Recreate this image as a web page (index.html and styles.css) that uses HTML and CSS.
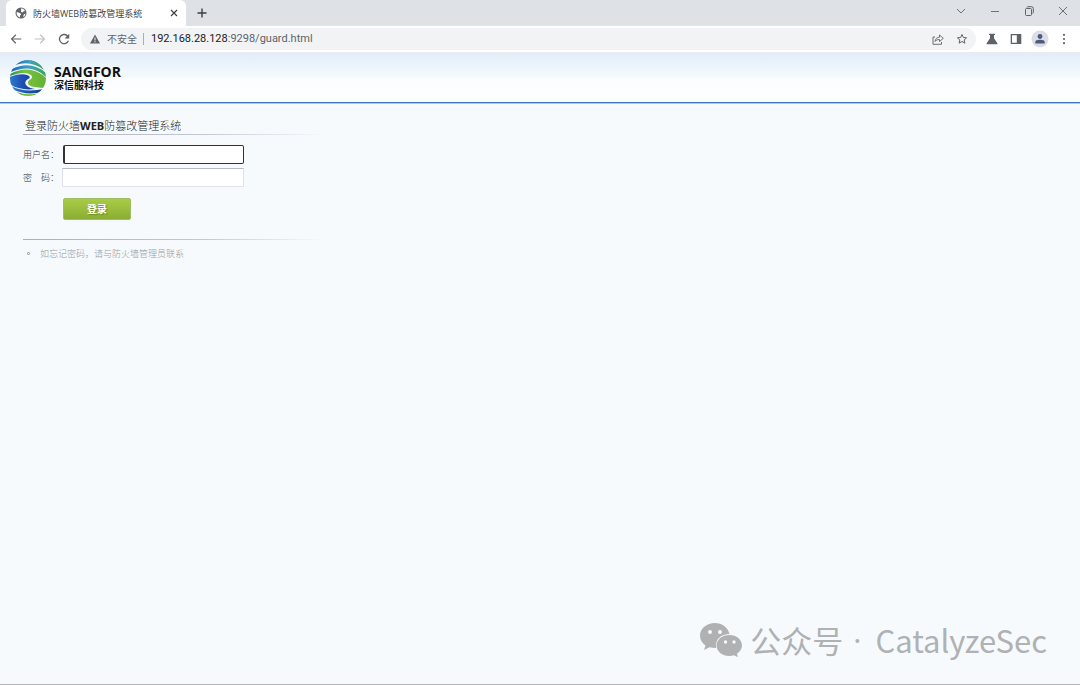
FILE: index.html
```html
<!DOCTYPE html>
<html lang="zh-CN">
  <head>
    <meta charset="UTF-8" />
    <meta name="viewport" content="width=device-width, initial-scale=1.0" />
    <title>防火墙WEB防篡改管理系统</title>
    <link rel="stylesheet" href="styles.css">
  </head>
  <body>
    <div class="tabbar">
      <div class="tab">
        <svg class="icon" viewBox="0 0 24 24"><circle cx="12" cy="12" r="11" fill="#5f6368"/><path d="M3 11c3-1 5 1 8 2 2 1 1 3-1 4v4C6 20 3 16 3 11zM12 3c3 0 6 1 8 5-2 1-3 0-4 2s-5 0-4-2 0-3 0-5zM21 13c0 3-2 6-4 7-1-3 0-6 4-7z" fill="#fff"/></svg>
        <span class="tab-title">防火墙WEB防篡改管理系统</span>
        <button class="icon-btn" aria-label="关闭标签页">
          <svg class="icon small" viewBox="0 0 10 10"><path d="M2 2l6 6M8 2l-6 6" stroke="#3c4043" stroke-width="1.200"/></svg>
        </button>
      </div>
      <button class="icon-btn new-tab" aria-label="新标签页">
        <svg class="icon" viewBox="0 0 12 12"><path d="M6 1.500v9M1.500 6h9" stroke="#3c4043" stroke-width="1.400"/></svg>
      </button>
      <div class="window-buttons">
        <button class="icon-btn" aria-label="搜索标签页"><svg class="icon" viewBox="0 0 12 12"><path d="M2 4l4 4 4-4" fill="none" stroke="#707276"/></svg></button>
        <button class="icon-btn" aria-label="最小化"><svg class="icon" viewBox="0 0 12 12"><path d="M2 6.500h8" stroke="#707276"/></svg></button>
        <button class="icon-btn" aria-label="还原"><svg class="icon" viewBox="0 0 12 12"><path d="M2.500 4.500q0-1 1-1h4q1 0 1 1v5q0 1-1 1h-4q-1 0-1-1zM4 2.500q.3-.8 1-.8h3.500q1.800 0 1.800 1.800v4q0 .8-.8 1" fill="none" stroke="#606266"/></svg></button>
        <button class="icon-btn" aria-label="关闭"><svg class="icon" viewBox="0 0 12 12"><path d="M2 2l8 8M10 2l-8 8" stroke="#606266" stroke-width=".9"/></svg></button>
      </div>
    </div>

    <div class="toolbar">
      <button class="icon-btn" aria-label="后退"><svg class="icon large" viewBox="0 0 24 24"><path d="M21 11H6.800l5.600-5.600L11 4l-8 8 8 8 1.400-1.400L6.800 13H21z" fill="#5f6368"/></svg></button>
      <button class="icon-btn" aria-label="前进"><svg class="icon large" viewBox="0 0 24 24"><path d="M3 11h14.200l-5.600-5.600L13 4l8 8-8 8-1.400-1.400 5.600-5.600H3z" fill="#bfc1c4"/></svg></button>
      <button class="icon-btn" aria-label="重新加载"><svg class="icon large" viewBox="0 0 24 24"><path d="M18.400 5.600A9 9 0 1 0 20.700 15h-2.400A6.700 6.700 0 1 1 16.700 7.300L13 11h8V3z" fill="#5f6368"/></svg></button>
      <div class="address">
        <svg class="icon small" viewBox="0 0 10 10"><path d="M5 .5L10 9.500H0z" fill="#5f6368"/><path d="M5 3.500v3M5 7.200v1.200" stroke="#f1f3f4"/></svg>
        <span class="insecure">不安全</span>
        <span class="url"><b>192.168.28.128</b>:9298/guard.html</span>
        <button class="icon-btn" aria-label="分享"><svg class="icon" viewBox="0 0 12 12"><path d="M3 4H1v7.300h8.500V9M3 8.500C3.500 5.500 5 4.300 7.500 4.200V2L11.300 5.300 7.500 8.500V6.500C5.500 6.500 4 7 3 8.500z" fill="none" stroke="#5f6368" stroke-width=".9"/></svg></button>
        <button class="icon-btn" aria-label="收藏"><svg class="icon" viewBox="0 0 24 24"><path d="M12 3l2.700 6 6.500.6-4.900 4.300 1.500 6.400L12 17l-5.800 3.300 1.500-6.400-4.900-4.300L9.300 9z" fill="none" stroke="#5f6368" stroke-width="2"/></svg></button>
      </div>
      <button class="icon-btn" aria-label="实验"><svg class="icon" viewBox="0 0 12 12"><path d="M3 .7h6v1.200H8v3.300l3.400 5q.4 1-.6 1.100H1.200q-1-.1-.6-1.100L4 5.200V1.900H3z" fill="#5f6368"/></svg></button>
      <button class="icon-btn" aria-label="侧边栏"><svg class="icon" viewBox="0 0 12 12"><path d="M.7 1h10.600v10H.7zM2 2.300v7.400h4.800V2.300z" fill="#5f6368" fill-rule="evenodd"/></svg></button>
      <button class="icon-btn" aria-label="用户"><svg class="icon avatar" viewBox="0 0 18 18"><circle cx="9" cy="9" r="8.500" fill="#dadde5"/><circle cx="9" cy="6.500" r="2.400" fill="#50597b"/><path d="M4.300 13.500v-1.300q0-2.400 4.700-2.400t4.700 2.400v1.300z" fill="#50597b"/></svg></button>
      <button class="icon-btn" aria-label="菜单"><svg class="icon" viewBox="0 0 12 12"><g fill="#5f6368"><circle cx="6" cy="1.800" r="1.100"/><circle cx="6" cy="6" r="1.100"/><circle cx="6" cy="10.200" r="1.100"/></g></svg></button>
    </div>

    <header class="header">
      <svg class="logo" viewBox="0 0 38 38">
        <defs>
          <clipPath id="ball"><circle cx="19" cy="19" r="18"/></clipPath>
          <linearGradient id="top"><stop offset="0" stop-color="#1d66b4"/><stop offset=".5" stop-color="#3f9fc4"/><stop offset="1" stop-color="#3fa653"/></linearGradient>
          <linearGradient id="blue"><stop offset="0" stop-color="#2f80d0"/><stop offset=".5" stop-color="#1f50b4"/><stop offset="1" stop-color="#173f8c"/></linearGradient>
          <linearGradient id="green"><stop offset="0" stop-color="#2c9350"/><stop offset=".4" stop-color="#7cc23c"/><stop offset="1" stop-color="#5fb036"/></linearGradient>
        </defs>
        <!-- white ball, coloured bands on top -->
        <g clip-path="url(#ball)">
          <circle cx="19" cy="19" r="18" fill="#eef6fc"/>
          <path d="M6 6Q19-5 32 6l3 5Q22 1 6 6z" fill="url(#top)"/>
          <path d="M3 10Q22 1 37 14v4Q23 4 2 13z" fill="url(#top)"/>
          <path d="M1 15Q12 9 22 11t16 9v9q-5 0-12-1-7-1-7-4t3-4q3-3-2-5-6-3-19 2z" fill="url(#green)"/>
          <path d="M0 18q12-4 18-2 5 2 1 4-5 3-1 7 2 2 8 3-15 2-26-5z" fill="url(#blue)"/>
          <path d="M2 27q13 7 33 3l-2 3Q17 37 3 30z" fill="url(#blue)"/>
          <path d="M7 33q12 4 24 1l-5 5H12z" fill="url(#green)"/>
        </g>
      </svg>
      <div class="brand">
        <span class="brand-en">SANGFOR</span>
        <span class="brand-cn">深信服科技</span>
      </div>
    </header>

    <main class="content">
      <h1>登录防火墙<b>WEB</b>防篡改管理系统</h1>
      <form class="login">
        <label for="username">用户名：</label>
        <input type="text" id="username" class="active" />
        <label for="password">密　码：</label>
        <input type="password" id="password" />
        <button type="submit" class="submit">登录</button>
      </form>
      <ul class="tips">
        <li>如忘记密码，请与防火墙管理员联系</li>
      </ul>
    </main>

    <div class="watermark">
      <svg class="wechat" viewBox="0 0 42 34">
        <path d="M15 0C6.500 0 0 5.700 0 12.700c0 4 2 7.400 5.500 9.800L4 27l5.500-2.800q3 .8 6.500.8C15 16 21 11 29.500 11 28 4.500 22 0 15 0z" fill="#afb1b3"/>
        <path d="M29.500 12C22 12 16.500 16.700 16.500 22.500S22 33 29.500 33q2.500 0 4.500-.8l4 2-1-3.500c3-2 5-5 5-8.200C42 16.700 36.500 12 29.500 12z" fill="#afb1b3"/>
        <g fill="#f6fafd"><circle cx="10" cy="9" r="2"/><circle cx="20" cy="9" r="2"/><circle cx="25.500" cy="19" r="1.700"/><circle cx="34" cy="19" r="1.700"/></g>
      </svg>
      <span>公众号</span>
      <span class="dot">·</span>
      <span>CatalyzeSec</span>
    </div>
  </body>
</html>
```

FILE: styles.css
```css
*,
*::before {
  box-sizing: border-box;
}
body {
  margin: 0;
  min-height: 100vh;
  display: flex;
  flex-direction: column;
  font-family: "Open Sans", "Noto Sans CJK SC", sans-serif;
  font-size: 9px;
  color: #444;
  background-color: #f6fafd;
  border-bottom: 1px solid #b5b5b9;
}
.icon {
  display: block;
  width: 12px;
  height: 12px;
}
.icon.small {
  width: 10px;
  height: 10px;
}
.icon.large {
  width: 14px;
  height: 14px;
}
.icon.avatar {
  width: 18px;
  height: 18px;
}
.icon-btn {
  display: flex;
  justify-content: center;
  width: 24px;
  padding: 0;
  border: none;
  background: none;
}

/* browser tabs */
.tabbar {
  display: flex;
  align-items: center;
  height: 26px;
  padding-left: 6px;
  background-color: #dee1e6;
}
.tab {
  display: flex;
  align-items: center;
  gap: 6px;
  width: 180px;
  height: 26px;
  padding-left: 9px;
  border-radius: 6px 6px 0 0;
  background-color: #fff;
}
.tab-title {
  flex: 1;
  white-space: nowrap;
}
.new-tab {
  margin-left: 4px;
}
.window-buttons {
  display: flex;
  gap: 10px;
  margin-left: auto;
  padding: 0 5px 4px 0;
}

/* address row */
.toolbar {
  display: flex;
  align-items: center;
  height: 27px;
  padding: 0 4px;
  background-color: #fff;
  border-bottom: 1px solid #e8eaed;
}
.address {
  display: flex;
  flex: 1;
  align-items: center;
  height: 22px;
  margin: 0 4px 0 5px;
  padding: 0 2px 0 9px;
  border-radius: 11px;
  background-color: #f1f3f4;
  line-height: 12px;
  color: #5f6368;
}
.insecure {
  margin: 0 7px;
  padding-right: 6px;
  border-right: 1px solid #aaadb1;
  font-size: 10px;
}
.url {
  flex: 1;
  font-family: Roboto, sans-serif;
  font-size: 11px;
  line-height: 14px;
}
.url b {
  font-weight: normal;
  color: #202124;
}

/* page header */
.header {
  display: flex;
  align-items: center;
  gap: 7px;
  height: 50px;
  padding-left: 9px;
  background-image: linear-gradient(#e2edf9, #f5fafd 24px, #fcfdff 26px, #fbfeff);
  border-bottom: 1px solid #3f78bd;
  box-shadow: 0 1px #a9cbe0;
}
.logo {
  width: 38px;
  height: 38px;
}
.brand {
  display: flex;
  flex-direction: column;
  font-weight: bold;
  color: #111;
}
.brand-en {
  font-size: 14px;
  line-height: 14px;
}
.brand-cn {
  font-size: 10px;
  line-height: 12px;
}

/* login form */
.content {
  width: 300px;
  margin: 14px 0 0 23px;
}
h1 {
  margin: 0;
  padding-left: 2px;
  font-size: 11px;
  line-height: 17px;
  font-weight: 300;
  color: #222;
  border-bottom: 1px solid;
  border-image: linear-gradient(to right, #a9adbf, #c4c8d6 60%, transparent) 1;
}
h1 b {
  font-weight: bold;
}
.login {
  display: grid;
  grid-template-columns: 39px 182px;
  row-gap: 4px;
  align-items: center;
  padding: 10px 0 19px;
}
.login label {
  font-weight: 300;
  color: #333;
}
.login input {
  height: 19px;
  padding: 0 3px;
  border: 1px solid #dfe2ea;
  border-top-color: #b8bcc6;
  background-color: #fff;
  font-size: 10px;
}
.login input.active {
  margin-left: 1px;
  border: 1px solid #333;
  border-left-width: 2px;
  border-radius: 2px;
}
.submit {
  grid-column: 2;
  width: 68px;
  height: 22px;
  margin: 7px 0 0 1px;
  padding: 0;
  border: 1px solid #9fbe62;
  border-radius: 2px;
  background-image: linear-gradient(#a9cc46, #8aae33);
  font-family: inherit;
  font-size: 10px;
  line-height: 18px;
  font-weight: bold;
  color: #fff;
  text-shadow: 1px 1px 1px #6c8c28;
}
.tips {
  margin: 0;
  padding: 5px 0 0;
  list-style: none;
  line-height: 17px;
  font-weight: 300;
  color: #999;
  border-top: 1px solid;
  border-image: linear-gradient(to right, #a9adbf, #c4c8d6 60%, transparent) 1;
}
.tips li {
  display: flex;
  align-items: center;
}
.tips li::before {
  content: "";
  width: 3px;
  height: 3px;
  margin: 0 10px 0 4px;
  border: 1px solid #aaa;
  border-radius: 1px;
}

/* account mark in the corner */
.watermark {
  position: absolute;
  right: 33px;
  bottom: 25px;
  display: flex;
  align-items: center;
  gap: 8px;
  font-family: "Noto Sans CJK SC", sans-serif;
  font-size: 31px;
  line-height: 40px;
  color: #afb1b3;
}
.wechat {
  width: 42px;
  height: 34px;
}
.dot {
  margin: 0 6px 0 2px;
  font-family: "Open Sans", sans-serif;
}
```
